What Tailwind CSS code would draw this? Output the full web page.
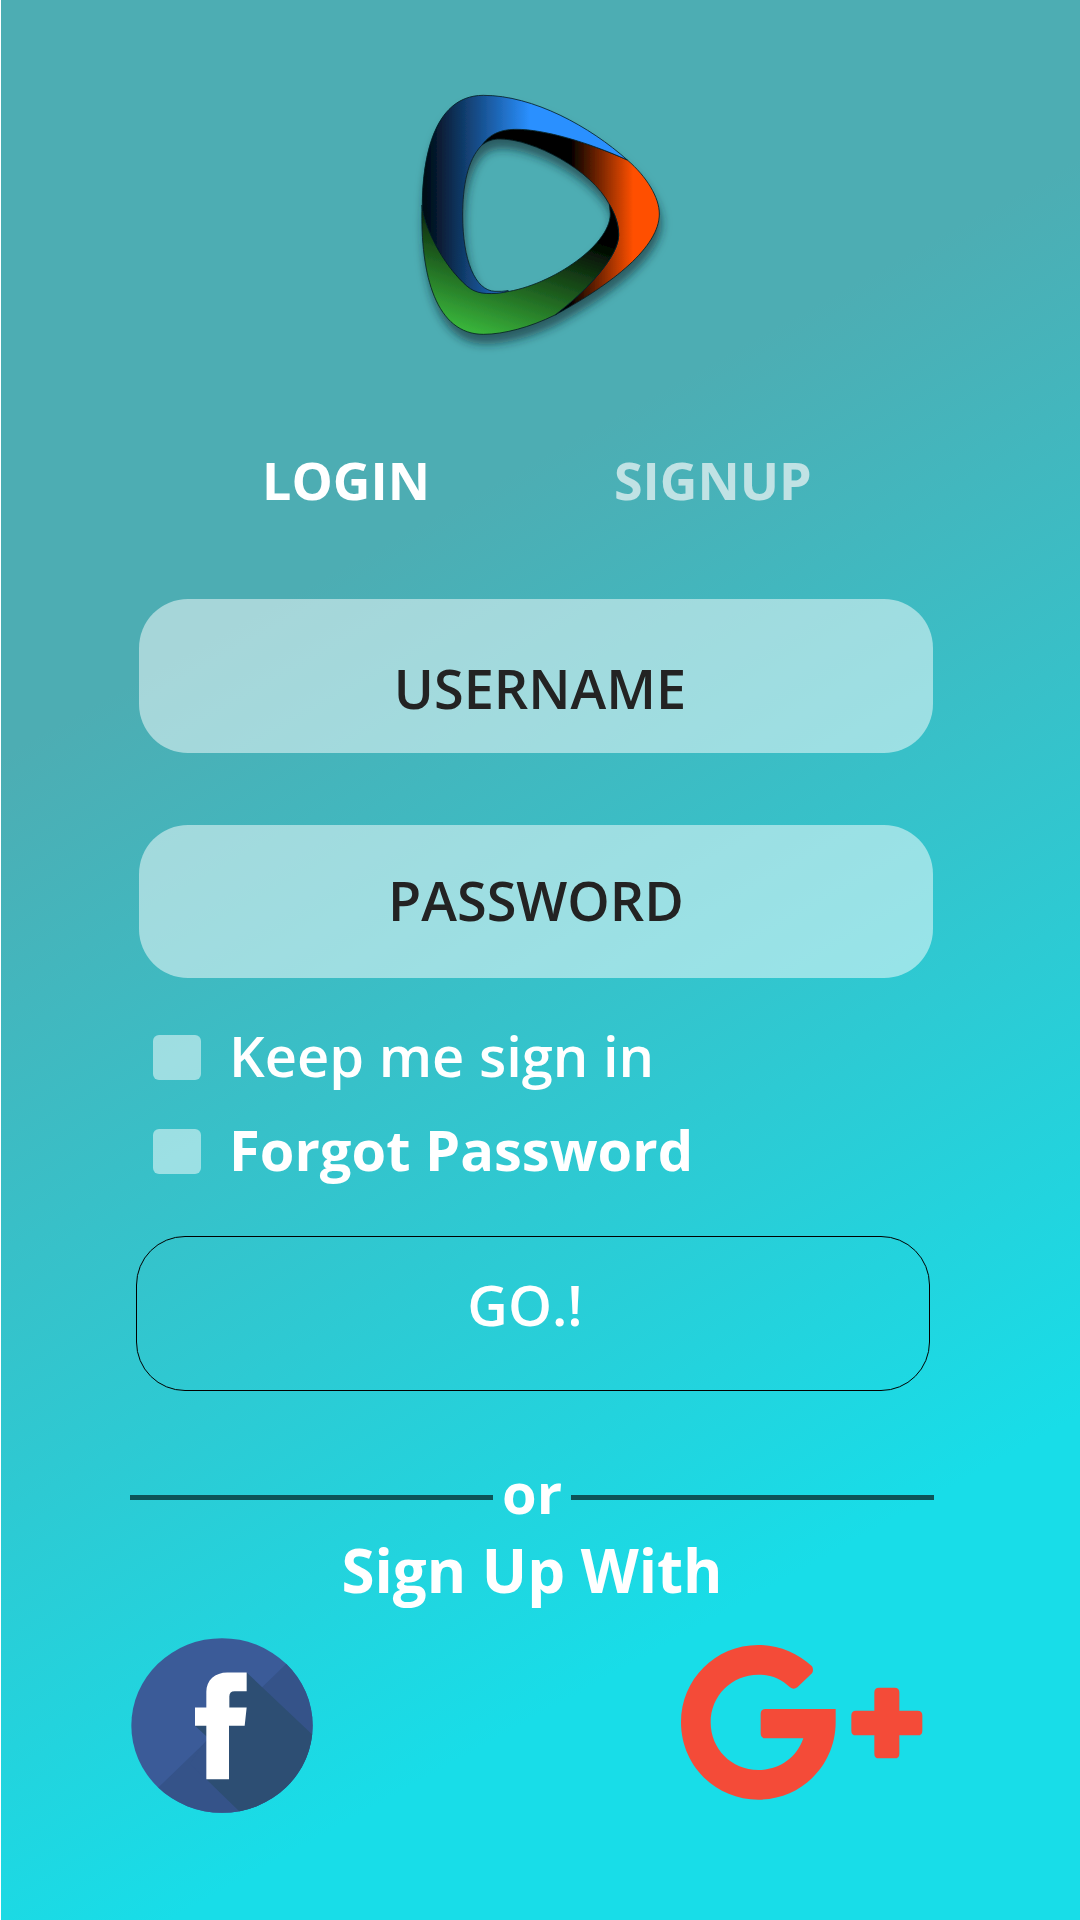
<!DOCTYPE html>
<html lang="en">
<head>
<meta charset="utf-8">
<meta name="viewport" content="width=device-width, initial-scale=1">
<title>Login</title>
<script src="https://cdn.jsdelivr.net/npm/@tailwindcss/browser@4"></script>
</head>
<body class="min-h-screen border-l border-white bg-[linear-gradient(151deg,#4dadb3_30%,#18dde8_80%)] font-['Open_Sans',sans-serif] font-semibold text-white">
<main class="flex flex-col pt-20 pr-[146px] pb-[105px] pl-[129px]">
  <svg class="ml-[270px] size-[280px]" viewBox="0 0 840 840" role="img" aria-label="Logo">
    <defs>
      <linearGradient id="blue" gradientUnits="userSpaceOnUse" x1="75" y1="0" x2="390" y2="0"><stop stop-color="#020a14"/><stop offset="1" stop-color="#2a90ff"/></linearGradient>
      <linearGradient id="orange" gradientUnits="userSpaceOnUse" x1="510" y1="0" x2="700" y2="0"><stop/><stop offset="1" stop-color="#ff5000"/></linearGradient>
      <linearGradient id="green" gradientUnits="userSpaceOnUse" x1="450" y1="430" x2="330" y2="800"><stop/><stop offset="1" stop-color="#3ab83c"/></linearGradient>
      <filter id="shadow" x="-10%" y="-10%" width="125%" height="130%"><feDropShadow dx="6" dy="28" stdDeviation="14" flood-color="#10282c" flood-opacity=".6"/></filter>
    </defs>
    <g filter="url(#shadow)" stroke="#062026" stroke-width="2.5" stroke-linejoin="round">
      <path fill="url(#orange)" d="M682 240C740 290 778 352 778 402C778 500 640 610 465 705C560 632 656 530 656 465C656 425 642 400 628 373C575 270 400 177 300 177C280 177 262 182 245 196C270 165 290 148 350 148C430 148 560 185 682 240Z"/>
      <path fill="url(#green)" d="M66 375C78 455 130 550 190 608C220 636 245 642 300 638C440 625 630 500 631 402L628 373C645 400 656 435 656 465C656 530 560 632 465 705C390 742 310 763 250 763C110 763 60 590 66 375Z"/>
      <path fill="url(#blue)" d="M67 385C66 250 95 46 250 46C400 46 570 140 682 240C560 185 430 148 350 148C290 148 265 170 245 196C202 240 188 320 188 405C188 540 225 632 285 634Q305 635 325 632Q312 639 290 640C245 643 218 638 190 608C130 550 78 455 67 385Z"/>
    </g>
  </svg>

  <nav class="mt-[85px] flex items-center gap-[184px] pl-[132px] text-[52px] leading-[70px] font-bold">
    <a href="#login" aria-current="page">LOGIN</a>
    <a href="#signup" class="text-[#c0e2e4]">SIGNUP</a>
  </nav>

  <form class="mt-[84px] flex flex-col">
    <div class="mr-px ml-[9px] flex flex-col gap-[72px]">
      <input type="text" aria-label="Username" placeholder="USERNAME" class="h-[154px] w-full rounded-[49px] bg-white/50 pt-6 pl-2 text-center text-[54px] text-[#232323] outline-none placeholder:text-[#232323]">
      <input type="password" aria-label="Password" placeholder="PASSWORD" class="h-[153px] w-full rounded-[49px] bg-white/50 pb-1 text-center text-[54px] text-[#232323] outline-none placeholder:text-[#232323]">
    </div>
    <div class="mt-[44px] ml-[23px] flex flex-col gap-6 text-[56px] leading-[70px]">
      <label class="flex items-center gap-7"><input type="checkbox" class="h-[45px] w-12 appearance-none rounded-md bg-white/50"><span class="pb-1 leading-[66px]">Keep me sign in</span></label>
      <label class="flex items-center gap-7"><input type="checkbox" class="h-[45px] w-12 appearance-none rounded-md bg-white/50"><span class="pb-1 leading-[66px] font-bold">Forgot Password</span></label>
    </div>
    <button type="submit" class="mt-[50px] mr-1 ml-[6px] h-[155px] rounded-[49px] border border-black pr-4 pb-5 text-[56px]">GO.!</button>
  </form>

  <div class="mt-[66px] flex items-center gap-[9px] text-[56px] leading-[70px] font-bold">
    <span class="mt-[10px] h-[5px] flex-1 bg-[#0d5458]"></span>
    <span>or</span>
    <span class="mt-[10px] h-[5px] flex-1 bg-[#0d5458]"></span>
  </div>
  <h2 class="mt-2 text-center text-[60px] leading-[70px] font-bold">Sign Up With</h2>

  <div class="mt-[33px] flex items-start justify-between pr-[11px] pl-px">
    <a href="#facebook" aria-label="Facebook">
      <svg class="h-[175px] w-[182px]" viewBox="63 54 546 524">
        <defs><clipPath id="disc"><ellipse cx="336" cy="316" rx="272" ry="262"/></clipPath></defs>
        <g clip-path="url(#disc)">
          <path fill="#3b5b98" d="M60 50H620V590H60Z"/>
          <path fill="#355389" d="M530 130L145 502V590H620V130Z"/>
          <path fill="#2d4e73" d="M410 157L620 356V590H405L289 477L345 400L255 317L300 260Z"/>
          <path fill="#3b5b98" d="M289 348V361L275 363Z"/>
          <path fill="#355389" d="M289 361V477L240 430Z"/>
        </g>
        <path fill="#fff" d="M289 477V317H255V262H289V215C289 180 315 157 352 157H410V213H374Q358 213 358 229V262H410L404 317H357V477Z"/>
      </svg>
    </a>
    <a href="#google-plus" aria-label="Google Plus" class="mt-[7px]">
      <svg class="h-[155px] w-[242px]" viewBox="64 75 726 465" fill="#f44b38">
        <path d="M457 139Q463 150 457 160L413 202Q402 210 391 202C365 177 335 164 296 164C215 164 153 228 153 307C153 387 215 450 296 450C358 450 410 415 431 355H318Q303 355 303 340V282Q303 267 318 267H528V307C528 435 426 539 296 539C166 539 64 435 64 307C64 179 166 75 296 75C357 75 413 99 457 139Z"/>
        <path d="M658 203H705Q719 203 719 217V272H774Q788 272 788 286V332Q788 346 774 346H719V401Q719 415 705 415H658Q644 415 644 401V346H589Q575 346 575 332V286Q575 272 589 272H644V217Q644 203 658 203Z"/>
      </svg>
    </a>
  </div>
</main>
</body>
</html>
